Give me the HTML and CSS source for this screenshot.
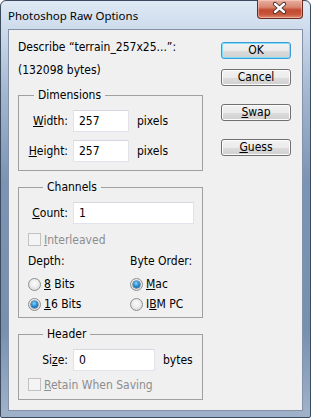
FILE: index.html
```html
<!DOCTYPE html>
<html lang="en">
<head>
    <meta charset="UTF-8">
    <title>Photoshop Raw Options</title>
    <link rel="stylesheet" href="styles.css">
</head>
<body>
    <div class="window">
        <div class="titlebar">
            <span class="title">Photoshop Raw Options</span>
            <button class="close" aria-label="Close">
                <svg width="46" height="19" viewBox="0 0 46 19">
                    <path d="M18 5 L27 13 M27 5 L18 13" stroke="#3a2a28" stroke-width="4.2" stroke-linecap="round" fill="none"/>
                    <path d="M18 5 L27 13 M27 5 L18 13" stroke="#fff" stroke-width="2.4" stroke-linecap="round" fill="none"/>
                </svg>
            </button>
        </div>
        <div class="client">
            <div class="left">
                <p class="line">Describe “terrain_257x25...”:</p>
                <p class="line">(132098 bytes)</p>

                <fieldset class="group">
                    <legend>Dimensions</legend>
                    <div class="row">
                        <label class="lbl"><u>W</u>idth:</label>
                        <input class="field short" type="text" value="257">
                        <span class="unit">pixels</span>
                    </div>
                    <div class="row gap">
                        <label class="lbl"><u>H</u>eight:</label>
                        <input class="field short" type="text" value="257">
                        <span class="unit">pixels</span>
                    </div>
                </fieldset>

                <fieldset class="group channels">
                    <legend>Channels</legend>
                    <div class="row">
                        <label class="lbl"><u>C</u>ount:</label>
                        <input class="field long" type="text" value="1">
                    </div>
                    <div class="check disabled">
                        <span class="box"></span>
                        <span><u>I</u>nterleaved</span>
                    </div>
                    <div class="cols">
                        <div class="col">
                            <div class="head">Depth:</div>
                            <div class="opt"><span class="radio"></span><span><u>8</u> Bits</span></div>
                            <div class="opt"><span class="radio on"></span><span><u>1</u>6 Bits</span></div>
                        </div>
                        <div class="col">
                            <div class="head">Byte Order:</div>
                            <div class="opt"><span class="radio on"></span><span><u>M</u>ac</span></div>
                            <div class="opt"><span class="radio"></span><span>I<u>B</u>M PC</span></div>
                        </div>
                    </div>
                </fieldset>

                <fieldset class="group header">
                    <legend>Header</legend>
                    <div class="row">
                        <label class="lbl">Si<u>z</u>e:</label>
                        <input class="field mid" type="text" value="0">
                        <span class="unit">bytes</span>
                    </div>
                    <div class="check disabled">
                        <span class="box"></span>
                        <span><u>R</u>etain When Saving</span>
                    </div>
                </fieldset>
            </div>
            <div class="buttons">
                <button class="btn default">OK</button>
                <button class="btn">Cancel</button>
                <button class="btn spaced"><u>S</u>wap</button>
                <button class="btn spaced"><u>G</u>uess</button>
            </div>
        </div>
    </div>
</body>
</html>
```

FILE: styles.css
```css
body {
    margin: 0;
    width: 311px;
    height: 418px;
    background: #fff;
    font-family: "DejaVu Sans Condensed", "DejaVu Sans", sans-serif;
    font-size: 12px;
    color: #000;
}

.window {
    position: relative;
    box-sizing: border-box;
    width: 311px;
    height: 418px;
    border: 1px solid #3d4b5e;
    border-radius: 6px 6px 2px 2px;
    padding: 0 7px 6px 7px;
    display: flex;
    flex-direction: column;
    background: linear-gradient(#dfe9f5 0, #cddbec 28px, #a5b8d1 90px, #7b93b4 180px, #7890b0 330px, #9fb1c9 410px);
}

.titlebar {
    height: 28px;
    display: flex;
    align-items: center;
    flex: none;
}

.title {
    font-family: "Noto Sans", "Open Sans", sans-serif;
    font-size: 11.5px;
    color: #000;
    margin-top: 1px;
}

.close {
    position: absolute;
    top: -1px;
    right: 7px;
    width: 46px;
    height: 19px;
    padding: 0;
    border: 1px solid #6b2a1f;
    border-top: none;
    border-radius: 0 0 4px 4px;
    background: linear-gradient(#eab0a2 0, #d88570 40%, #c24a31 55%, #c8553a 80%, #de8e74 100%);
    box-shadow: inset 0 0 0 1px rgba(255, 220, 210, 0.45);
}

.close svg {
    display: block;
    margin: -1px 0 0 -1px;
}

.client {
    flex: 1;
    display: flex;
    gap: 18px;
    border: 1px solid #8392a6;
    background: #f0f0f0;
    padding: 10px 11px 0 9px;
}

.left {
    width: 185px;
    flex: none;
}

.line {
    margin: 0 0 9px 0;
    line-height: 14px;
}

.group {
    margin: 11px 0 0 0;
    padding: 8px 0 8px 0;
    border: 1px solid #a0a0a0;
    min-width: 0;
}

.group legend {
    margin-left: 15px;
    padding: 0 4px;
    line-height: 14px;
}

.group.channels,
.group.header {
    margin-top: 9px;
}

.group.channels {
    padding: 8px 0 6px 9px;
}

.group.header {
    padding: 8px 0 8px 9px;
}

.row {
    display: flex;
    align-items: center;
    height: 22px;
}

.row.gap {
    margin-top: 8px;
}

.lbl {
    width: 49px;
    text-align: right;
    margin-right: 5px;
    flex: none;
}

.channels .lbl,
.header .lbl {
    width: 40px;
}

.field {
    box-sizing: border-box;
    height: 22px;
    border: 1px solid #e2e3ea;
    border-top-color: #d5d8de;
    background: #fff;
    font: inherit;
    padding: 0 5px;
    margin: 0;
    outline: none;
    flex: none;
}

.field.short {
    width: 56px;
}

.field.long {
    width: 121px;
}

.field.mid {
    width: 82px;
}

.unit {
    margin-left: 8px;
}

.check {
    display: flex;
    align-items: center;
    gap: 3px;
    height: 13px;
    margin-top: 9px;
}

.header .check {
    margin-top: 7px;
}

.check.disabled {
    color: #8d8d8d;
}

.box {
    box-sizing: border-box;
    width: 13px;
    height: 13px;
    border: 1px solid #c2c2c2;
    background: #f4f4f4;
}

.cols {
    display: flex;
    margin-top: 8px;
}

.col {
    width: 102px;
    flex: none;
}

.col + .col {
    width: auto;
    flex: 1;
}

.head {
    line-height: 14px;
    height: 14px;
}

.opt {
    display: flex;
    align-items: center;
    gap: 3px;
    height: 14px;
    margin-top: 9px;
}

.opt + .opt {
    margin-top: 6px;
}

.radio {
    position: relative;
    box-sizing: border-box;
    width: 13px;
    height: 13px;
    border-radius: 50%;
    border: 1px solid #8e8f8f;
    background: radial-gradient(circle at 50% 40%, #fcfcfc 0, #ececec 45%, #cfcfcf 100%);
}

.radio.on::after {
    content: "";
    position: absolute;
    left: 2px;
    top: 2px;
    width: 7px;
    height: 7px;
    border-radius: 50%;
    background: radial-gradient(circle at 45% 35%, #8fd8ff 0, #2a8fd0 45%, #0d4f8a 100%);
    box-shadow: 0 0 0 0.5px #1d4f7a;
}

.buttons {
    width: 70px;
    display: flex;
    flex-direction: column;
    padding-top: 2px;
}

.btn {
    box-sizing: border-box;
    width: 70px;
    height: 17px;
    padding: 0;
    border: 1px solid #707070;
    border-radius: 3px;
    background: linear-gradient(#f2f2f2 0, #ebebeb 50%, #dddddd 51%, #cfcfcf 100%);
    box-shadow: inset 0 0 0 1px #fcfcfc;
    font: inherit;
    font-size: 12px;
    line-height: 15px;
    color: #000;
}

.btn + .btn {
    margin-top: 10px;
}

.btn.spaced {
    margin-top: 18px;
}

.btn.default {
    border-color: #3c9ad8;
    box-shadow: inset 0 0 0 1px #7ee0fb;
}
```
